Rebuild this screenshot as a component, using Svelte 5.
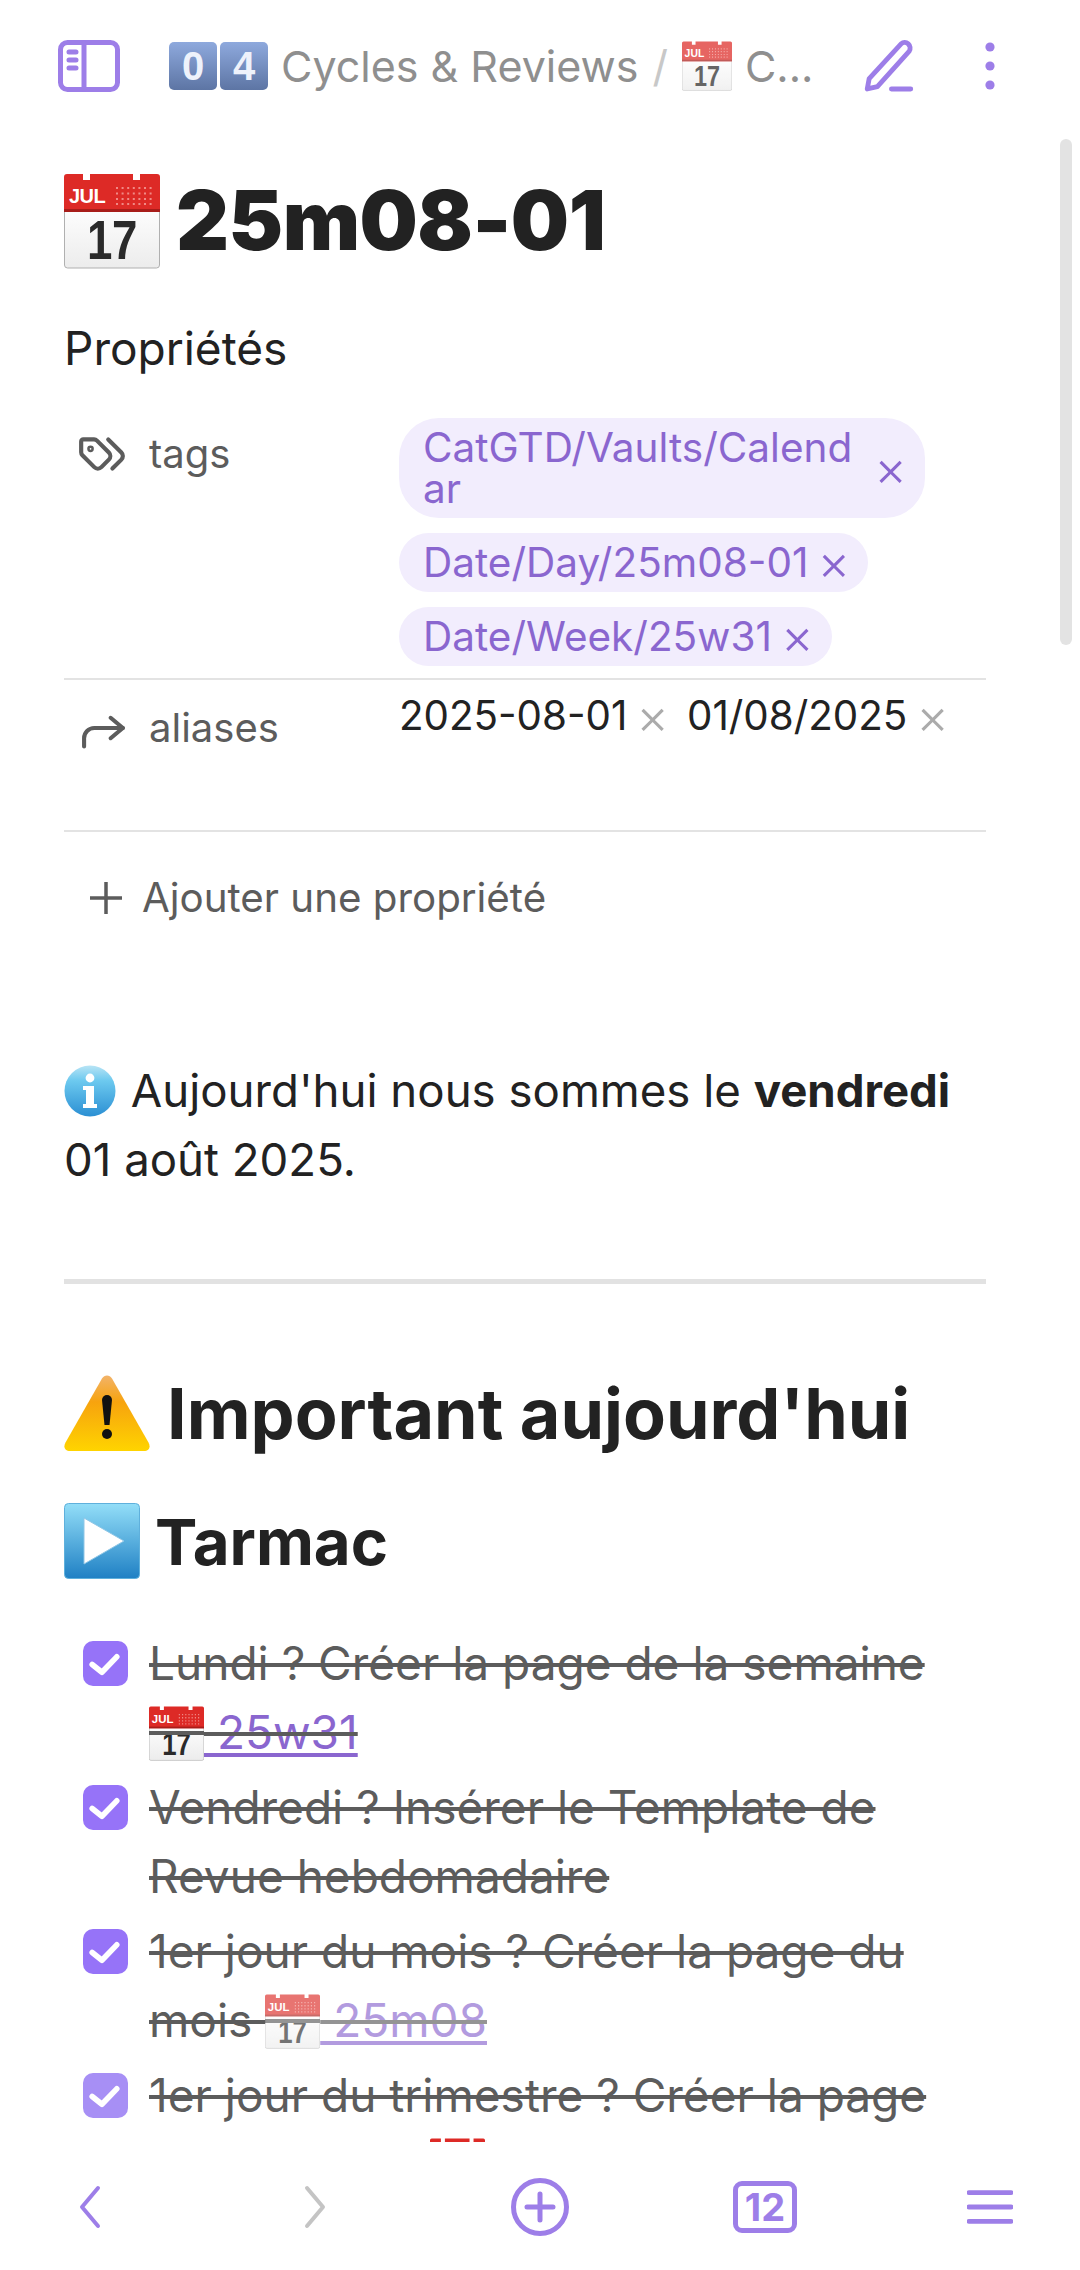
<script>
	const tags = ['CatGTD/Vaults/Calendar', 'Date/Day/25m08-01', 'Date/Week/25w31'];
	const aliases = ['2025-08-01', '01/08/2025'];
</script>

{#snippet calendar(cls)}
	<svg class="emoji {cls}" viewBox="0 0 96 96" role="img" aria-label="calendrier">
		<defs>
			<linearGradient id="calPage" x1="0" y1="0" x2="0" y2="1">
				<stop offset="0" stop-color="#ffffff" />
				<stop offset="1" stop-color="#ececec" />
			</linearGradient>
		</defs>
		<rect x="0.5" y="30" width="95" height="65" rx="3" fill="url(#calPage)" stroke="#b0b0b0" />
		<path d="M3 1h16v6h7V1h43v6h7V1h17a3 3 0 0 1 3 3v35H0V4a3 3 0 0 1 3-3z" fill="#dd2a26" />
		<rect x="0" y="36" width="96" height="3" fill="#a81d1a" />
		<text x="5" y="30" class="cal-month">JUL</text>
		<path d="M52 15h39M52 20.500h39M52 26h39M52 31h39" stroke="#f08a86" stroke-width="2.2" stroke-dasharray="2 3.600" />
		<text x="48" y="86" class="cal-day" textLength="50" lengthAdjust="spacingAndGlyphs">17</text>
	</svg>
{/snippet}

{#snippet taskCal()}
	<span class="em-wrap">{@render calendar('cal-task')}</span>
{/snippet}

{#snippet check()}
	<span class="check"><svg viewBox="0 0 44 44" fill="none"><path d="M9 23l9.500 7.500L33 15.500" /></svg></span>
{/snippet}

<div class="app">
	<header class="top">
		<svg class="ic side" viewBox="0 0 62 52" fill="none">
			<rect x="2.5" y="2.5" width="57" height="47" rx="7" />
			<path d="M26 3v46M11 12h7M11 20h7M11 28h7" />
		</svg>
		<div class="crumb">
			<span class="keys"><span class="key">0</span><span class="key">4</span></span>
			<span class="crumb-text">Cycles &amp; Reviews</span>
			<span class="sep">/</span>
			{@render calendar('cal-crumb')}
			<span class="crumb-text">C...</span>
		</div>
		<svg class="ic pen" viewBox="0 0 24 24" fill="none">
			<path d="M13 21.5h8" />
			<path d="M17 2.8a2.3 2.3 0 0 1 3.4 3L7.2 20.5l-4.2 1 .8-4.3z" />
		</svg>
		<svg class="dots" viewBox="0 0 12 48" aria-hidden="true">
			<circle cx="6" cy="5" r="4.6" />
			<circle cx="6" cy="24" r="4.6" />
			<circle cx="6" cy="43" r="4.6" />
		</svg>
	</header>

	<main class="content">
		<h1>{@render calendar('cal-title')}25m08-01</h1>

		<div class="props-title">Propriétés</div>
		<section class="props">
			<div class="prop prop-tags">
				<div class="key-name">
					<svg class="ic-key" viewBox="0 0 24 24" fill="none">
						<path d="m15 5 6.3 6.3a2.4 2.4 0 0 1 0 3.4L17 19" />
						<path d="M9.586 5.586A2 2 0 0 0 8.172 5H3a1 1 0 0 0-1 1v5.172a2 2 0 0 0 .586 1.414L8.29 18.29a2.426 2.426 0 0 0 3.42 0l3.58-3.58a2.426 2.426 0 0 0 0-3.42z" />
						<circle cx="6.5" cy="9.5" r=".6" />
					</svg>
					<span>tags</span>
				</div>
				<div class="pills">
					{#each tags as tag}
						<span class="pill"><span class="pill-text">{tag}</span><span class="x">×</span></span>
					{/each}
				</div>
			</div>
			<div class="prop prop-alias">
				<div class="key-name">
					<svg class="ic-key" viewBox="0 0 24 24" fill="none">
						<path d="M15 7l6 5-6 5" />
						<path d="M2 21v-4a5 5 0 0 1 5-5h14" />
					</svg>
					<span>aliases</span>
				</div>
				<div class="aliases">
					{#each aliases as alias}
						<span class="alias">{alias}<span class="x">×</span></span>
					{/each}
				</div>
			</div>
		</section>
		<div class="add-prop">
			<svg viewBox="0 0 36 36" fill="none"><path d="M18 2v32M2 18h32" /></svg>
			<span>Ajouter une propriété</span>
		</div>

		<p class="intro">
			<svg class="emoji info" viewBox="0 0 52 52" role="img" aria-label="information">
				<defs>
					<linearGradient id="infoBg" x1="0" y1="0" x2="0" y2="1">
						<stop offset="0" stop-color="#b8e4f5" />
						<stop offset="0.3" stop-color="#6cc9ef" />
						<stop offset="1" stop-color="#2b8fd3" />
					</linearGradient>
				</defs>
				<circle cx="26" cy="26" r="25.5" fill="url(#infoBg)" />
				<circle cx="26" cy="13" r="4.4" fill="#fff" />
				<path d="M19 21h11v18h3v4H19v-4h3V25h-3z" fill="#fff" />
			</svg>
			Aujourd'hui nous sommes le <strong>vendredi</strong> 01 août 2025.
		</p>

		<hr />

		<h2>
			<svg class="emoji warn" viewBox="0 0 86 76" role="img" aria-label="attention">
				<defs>
					<linearGradient id="warnBg" x1="0" y1="0" x2="0" y2="1">
						<stop offset="0" stop-color="#f2b36a" />
						<stop offset="0.35" stop-color="#f7a30e" />
						<stop offset="1" stop-color="#ffd400" />
					</linearGradient>
				</defs>
				<path d="M38 3.5c2.4-4 7.600-4 10 0l36.500 64c2.500 4.500.5 8.500-4.500 8.500H6c-5 0-7-4-4.500-8.500z" fill="url(#warnBg)" />
				<path d="M38 25a5 5 0 0 1 10 0l-2.500 25h-5z" fill="#111" />
				<circle cx="43" cy="59" r="5" fill="#111" />
			</svg>Important aujourd'hui
		</h2>

		<h3>
			<svg class="emoji play" viewBox="0 0 76 76" role="img" aria-label="lecture">
				<defs>
					<linearGradient id="playBg" x1="0" y1="0" x2="0" y2="1">
						<stop offset="0" stop-color="#93def8" />
						<stop offset="1" stop-color="#1f80c4" />
					</linearGradient>
				</defs>
				<rect x="0.5" y="0.5" width="75" height="75" rx="4" fill="url(#playBg)" stroke="#5fb0dc" />
				<path d="M20 15l40 23-40 23z" fill="#fff" stroke="#8fc6e6" />
			</svg>Tarmac
		</h3>

		<ul class="tasks">
			<li>
				{@render check()}
				<span class="task-text">Lundi ? Créer la page de la semaine {@render taskCal()}<span class="link">&nbsp;25w31</span></span>
			</li>
			<li>
				{@render check()}
				<span class="task-text">Vendredi ? Insérer le Template de Revue hebdomadaire</span>
			</li>
			<li>
				{@render check()}
				<span class="task-text">1er jour du mois ? Créer la page du mois <span class="faded">{@render taskCal()}<span class="link">&nbsp;25m08</span></span></span>
			</li>
			<li class="soft">
				{@render check()}
				<span class="task-text">1er jour du trimestre ? Créer la page du trimestre {@render taskCal()}</span>
			</li>
		</ul>

		<div class="scrollbar"></div>
	</main>

	<footer class="bottom">
		<span class="tab"><svg class="ic chev" viewBox="0 0 24 48" fill="none"><path d="M20 5L4 24l16 19" /></svg></span>
		<span class="tab"><svg class="ic chev off" viewBox="0 0 24 48" fill="none"><path d="M4 5l16 19L4 43" /></svg></span>
		<span class="tab"><svg class="ic plus" viewBox="0 0 58 58" fill="none">
			<circle cx="29" cy="29" r="26.500" />
			<path d="M29 16v26M16 29h26" />
		</svg></span>
		<span class="tab"><span class="count">12</span></span>
		<span class="tab"><svg class="ic menu" viewBox="0 0 48 36" fill="none"><path d="M2 3h44M2 18h44M2 33h44" /></svg></span>
	</footer>
</div>

<style>
	:global(body) {
		margin: 0;
		background: #fff;
	}

	.app {
		position: relative;
		width: 1080px;
		height: 2270px;
		display: flex;
		flex-direction: column;
		overflow: hidden;
		font-family: Inter, 'Noto Sans', sans-serif;
		color: #222;
		background: #fff;
	}

	.ic {
		stroke: #9d7ee8;
		stroke-linecap: round;
		stroke-linejoin: round;
	}

	/* top bar */
	.top {
		flex: none;
		height: 132px;
		display: flex;
		align-items: center;
		padding: 0 0 0 58px;
		box-sizing: border-box;
	}

	.side {
		width: 62px;
		height: 52px;
		stroke-width: 5;
		flex: none;
	}

	.crumb {
		width: 691px;
		margin-left: 49px;
		flex: none;
		display: flex;
		align-items: center;
		font-size: 43px;
		color: #8f8f8f;
		white-space: nowrap;
		overflow: hidden;
	}

	.keys {
		display: flex;
		gap: 3px;
		margin-right: 13px;
	}

	.key {
		width: 48px;
		height: 48px;
		border-radius: 5px;
		background: linear-gradient(#8ea9dd, #5d75a4);
		color: #eef2fb;
		font-family: 'Liberation Sans', sans-serif;
		font-size: 40px;
		font-weight: 700;
		display: flex;
		align-items: center;
		justify-content: center;
	}

	.sep {
		color: #c8c8c8;
		margin: 0 14px;
	}

	.cal-crumb {
		width: 50px;
		height: 50px;
		opacity: 0.72;
		margin-right: 13px;
	}

	.pen {
		width: 58px;
		height: 58px;
		stroke-width: 2;
		flex: none;
	}

	.dots {
		width: 12px;
		height: 48px;
		fill: #9d7ee8;
		margin-left: 66px;
		flex: none;
	}

	/* note content */
	.content {
		position: relative;
		flex: 1;
		min-height: 0;
		overflow: hidden;
		padding: 0 94px 0 64px;
	}

	.emoji {
		display: inline-block;
		vertical-align: middle;
	}

	.cal-month {
		font-family: 'Liberation Sans', sans-serif;
		font-size: 20px;
		font-weight: 700;
		fill: #fff;
	}

	.cal-day {
		font-family: 'Liberation Sans', sans-serif;
		font-size: 56px;
		font-weight: 700;
		fill: #2a2a2a;
		text-anchor: middle;
	}

	h1 {
		margin: 40px 0 0;
		height: 98px;
		display: flex;
		align-items: center;
		gap: 16px;
		font-size: 82px;
		font-weight: 900;
		line-height: 98px;
		letter-spacing: -0.5px;
	}

	.cal-title {
		width: 96px;
		height: 96px;
		flex: none;
	}

	.props-title {
		margin-top: 44px;
		font-size: 46px;
		line-height: 68px;
	}

	.prop {
		display: grid;
		grid-template-columns: 335px 1fr;
		border-bottom: 2px solid #e3e3e3;
	}

	.prop-tags {
		padding-top: 36px;
		padding-bottom: 12px;
	}

	.prop-alias {
		height: 152px;
		box-sizing: border-box;
	}

	.key-name {
		display: flex;
		align-items: flex-start;
		gap: 20px;
		padding-top: 11px;
		padding-left: 11px;
		font-size: 40px;
		line-height: 50px;
		color: #5c5c5c;
	}

	.prop-alias .key-name {
		padding-top: 23px;
		padding-left: 16px;
	}

	.ic-key {
		width: 54px;
		height: 50px;
		flex: none;
		stroke: #5c5c5c;
		stroke-width: 2;
		stroke-linecap: round;
		stroke-linejoin: round;
	}

	.prop-alias .ic-key {
		width: 49px;
	}

	.pills {
		display: flex;
		flex-direction: column;
		align-items: flex-start;
		gap: 15px;
	}

	.pill {
		display: flex;
		align-items: center;
		box-sizing: border-box;
		max-width: 526px;
		padding: 9px 18px 9px 24px;
		border-radius: 40px;
		background: #f2edfd;
		color: #8a66cf;
		font-size: 40.500px;
		line-height: 41px;
	}

	.pill-text {
		overflow-wrap: anywhere;
	}

	.pill .x {
		margin-left: 9px;
		font-size: 50px;
		font-weight: 300;
		line-height: 41px;
		flex: none;
	}

	.aliases {
		display: flex;
		gap: 18px;
		padding-top: 11px;
		font-size: 40.300px;
		line-height: 50px;
	}

	.alias {
		display: flex;
		white-space: nowrap;
	}

	.alias .x {
		margin-left: 9px;
		font-size: 50px;
		font-weight: 300;
		color: #ababab;
	}

	.add-prop {
		display: flex;
		align-items: center;
		gap: 18px;
		margin-top: 41px;
		padding-left: 24px;
		font-size: 40.300px;
		line-height: 50px;
		color: #5c5c5c;
	}

	.add-prop svg {
		width: 36px;
		height: 36px;
		stroke: #5c5c5c;
		stroke-width: 3.500;
		flex: none;
	}

	.intro {
		margin: 133px 0 0;
		font-size: 45.600px;
		line-height: 69px;
	}

	.info {
		width: 52px;
		height: 52px;
		margin-right: 2px;
		vertical-align: -10px;
	}

	strong {
		font-weight: 700;
	}

	hr {
		margin: 85px 0 0;
		height: 5px;
		border: 0;
		background: #e2e2e2;
	}

	h2 {
		margin: 83px 0 0;
		height: 92px;
		display: flex;
		align-items: center;
		gap: 17px;
		font-size: 70px;
		font-weight: 700;
	}

	.warn {
		width: 86px;
		height: 76px;
		flex: none;
	}

	h3 {
		margin: 44px 0 0;
		height: 76px;
		display: flex;
		align-items: center;
		gap: 15px;
		font-size: 63.500px;
		font-weight: 700;
	}

	.play {
		width: 76px;
		height: 76px;
		flex: none;
	}

	.tasks {
		list-style: none;
		margin: 50px 0 0;
		padding: 0 0 0 19px;
		font-size: 46px;
		line-height: 69px;
		color: #5c5c5c;
	}

	.tasks li {
		display: flex;
		gap: 21px;
		margin-bottom: 6px;
	}

	.check {
		flex: none;
		width: 45px;
		height: 45px;
		margin-top: 12px;
		border-radius: 10px;
		background: #9673f8;
		display: flex;
	}

	.soft .check {
		background: #a78ff5;
	}

	.check svg {
		width: 45px;
		height: 45px;
		stroke: #fff;
		stroke-width: 5.500;
		stroke-linecap: round;
		stroke-linejoin: round;
	}

	.task-text {
		text-decoration: line-through;
		text-decoration-thickness: 4px;
		text-decoration-color: #5c5c5c;
	}

	/* the strike line has to run over the emoji too */
	.em-wrap {
		position: relative;
		display: inline-block;
		width: 55px;
		height: 55px;
		vertical-align: -12px;
	}

	.em-wrap::after {
		content: '';
		position: absolute;
		left: 0;
		right: 0;
		top: 25px;
		height: 4px;
		background: #5c5c5c;
	}

	.soft .em-wrap {
		margin-left: 6px;
	}

	.cal-task {
		display: block;
		width: 55px;
		height: 55px;
	}

	.link {
		color: #8a66cf;
		text-decoration: underline;
		text-decoration-thickness: 4px;
		text-underline-offset: 4px;
	}

	.faded {
		opacity: 0.65;
	}

	.scrollbar {
		position: absolute;
		top: 7px;
		right: 8px;
		width: 12px;
		height: 506px;
		border-radius: 6px;
		background: #e3e3e3;
	}

	/* bottom bar */
	.bottom {
		flex: none;
		height: 128px;
		display: flex;
		justify-content: space-between;
		box-sizing: border-box;
		padding: 36px 48px 0;
		background: #fff;
	}

	.tab {
		width: 84px;
		height: 58px;
		display: flex;
		align-items: center;
		justify-content: center;
	}

	.chev {
		width: 24px;
		height: 48px;
		stroke-width: 4;
	}

	.chev.off {
		stroke: #c4c4c4;
	}

	.plus {
		width: 58px;
		height: 58px;
		stroke-width: 5;
	}

	.count {
		box-sizing: border-box;
		width: 64px;
		height: 52px;
		border: 5px solid #9d7ee8;
		border-radius: 9px;
		color: #9d7ee8;
		font-size: 38px;
		font-weight: 700;
		line-height: 42px;
		text-align: center;
	}

	.menu {
		width: 46px;
		height: 36px;
		stroke-width: 5;
	}
</style>
